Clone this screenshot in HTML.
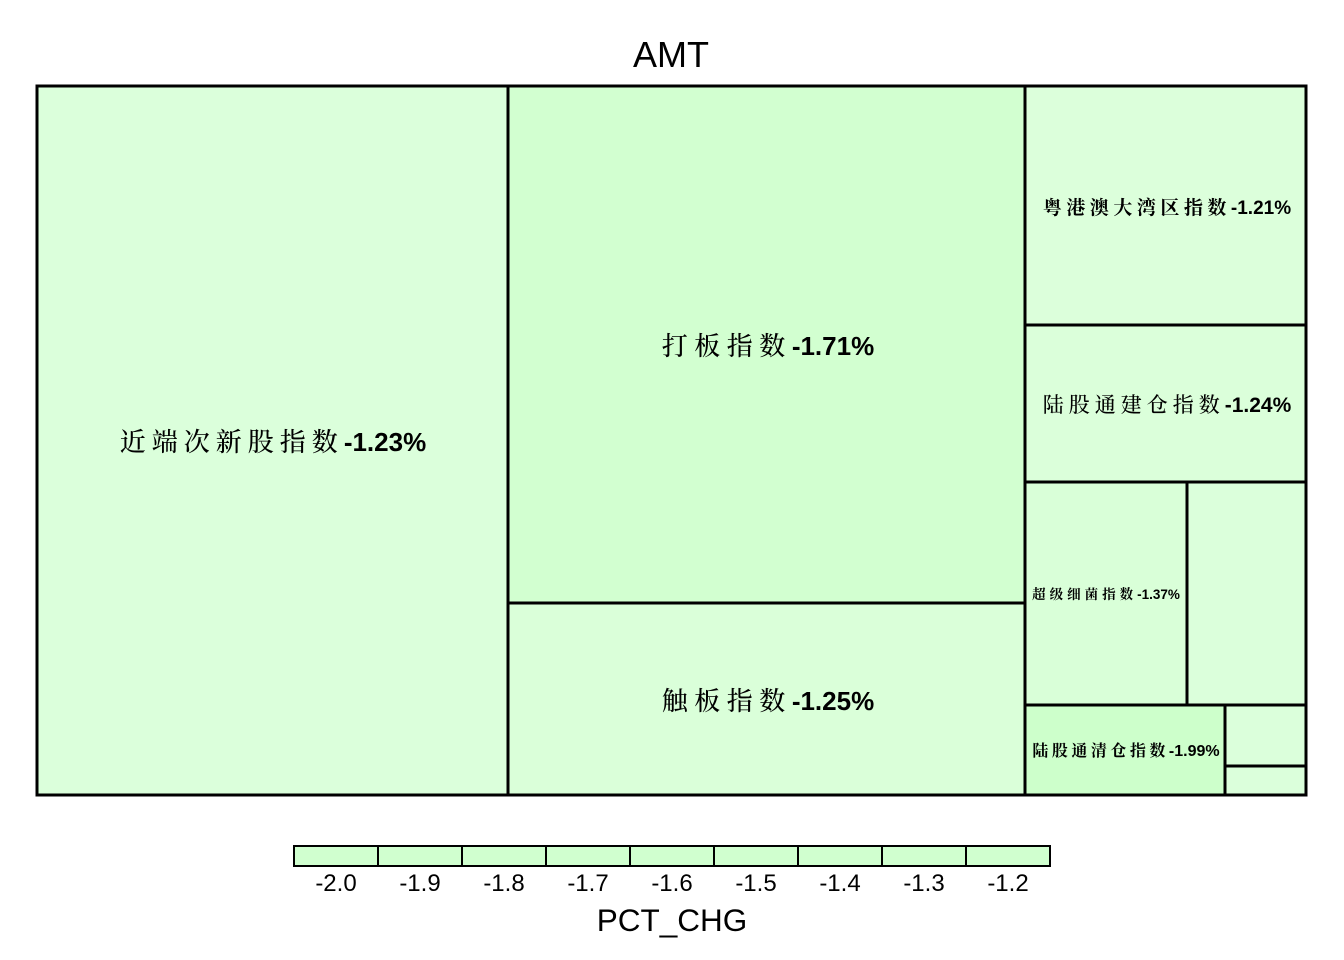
<!DOCTYPE html>
<html><head><meta charset="utf-8"><style>
html,body{margin:0;padding:0;background:#fff;width:1344px;height:960px;overflow:hidden}
svg text{font-family:"Liberation Sans","Noto Serif CJK SC",serif}
.c{font-family:"Noto Serif CJK SC","Liberation Serif",serif}
.n{font-family:"Liberation Sans",sans-serif;font-weight:bold}
</style></head><body>
<svg width="1344" height="960" xmlns="http://www.w3.org/2000/svg">
<text x="671" y="67" font-size="36" text-anchor="middle" fill="#000" style="font-family:'Liberation Sans',sans-serif">AMT</text>
<g stroke="#000" stroke-width="3">
<rect x="37" y="86" width="471" height="709" fill="#dbffdb"/>
<rect x="508" y="86" width="517" height="517" fill="#d2ffd0"/>
<rect x="508" y="603" width="517" height="192" fill="#daffd9"/>
<rect x="1025" y="86" width="281" height="239" fill="#dcffdb"/>
<rect x="1025" y="325" width="281" height="157" fill="#dbffda"/>
<rect x="1025" y="482" width="162" height="223" fill="#d9ffd8"/>
<rect x="1187" y="482" width="119" height="223" fill="#dbffdb"/>
<rect x="1025" y="705" width="200" height="90" fill="#cdffcb"/>
<rect x="1225" y="705" width="81" height="61" fill="#dbffdb"/>
<rect x="1225" y="766" width="81" height="29" fill="#dbffdb"/>
<rect x="37" y="86" width="1269" height="709" fill="none"/>
</g>
<g fill="#000">
<text x="273" y="451" font-size="26" text-anchor="middle"><tspan class="c" font-weight="500" letter-spacing="6">近端次新股指数</tspan><tspan class="n">-1.23%</tspan></text>
<text x="768" y="355" font-size="26" text-anchor="middle"><tspan class="c" font-weight="500" letter-spacing="6.5">打板指数</tspan><tspan class="n">-1.71%</tspan></text>
<text x="768" y="710" font-size="26" text-anchor="middle"><tspan class="c" font-weight="500" letter-spacing="6.5">触板指数</tspan><tspan class="n">-1.25%</tspan></text>
<text x="1167" y="214" font-size="19" text-anchor="middle"><tspan class="c" font-weight="700" letter-spacing="4.5">粤港澳大湾区指数</tspan><tspan class="n">-1.21%</tspan></text>
<text x="1167" y="412" font-size="21" text-anchor="middle"><tspan class="c" font-weight="500" letter-spacing="5">陆股通建仓指数</tspan><tspan class="n">-1.24%</tspan></text>
<text x="1106" y="599" font-size="13.5" text-anchor="middle"><tspan class="c" font-weight="700" letter-spacing="4">超级细菌指数</tspan><tspan class="n">-1.37%</tspan></text>
<text x="1126" y="756" font-size="16" text-anchor="middle"><tspan class="c" font-weight="700" letter-spacing="3.5">陆股通清仓指数</tspan><tspan class="n">-1.99%</tspan></text>
</g>
<g stroke="#000" stroke-width="2" fill="#d0ffcf">
<rect x="294" y="846" width="84" height="20"/><rect x="378" y="846" width="84" height="20"/>
<rect x="462" y="846" width="84" height="20"/><rect x="546" y="846" width="84" height="20"/>
<rect x="630" y="846" width="84" height="20"/><rect x="714" y="846" width="84" height="20"/>
<rect x="798" y="846" width="84" height="20"/><rect x="882" y="846" width="84" height="20"/>
<rect x="966" y="846" width="84" height="20"/>
</g>
<g font-size="24" text-anchor="middle" fill="#000" style="font-family:'Liberation Sans',sans-serif">
<text x="336" y="891">-2.0</text><text x="420" y="891">-1.9</text><text x="504" y="891">-1.8</text>
<text x="588" y="891">-1.7</text><text x="672" y="891">-1.6</text><text x="756" y="891">-1.5</text>
<text x="840" y="891">-1.4</text><text x="924" y="891">-1.3</text><text x="1008" y="891">-1.2</text>
<text x="672" y="931" font-size="31.5">PCT_CHG</text>
</g>
</svg>
</body></html>
